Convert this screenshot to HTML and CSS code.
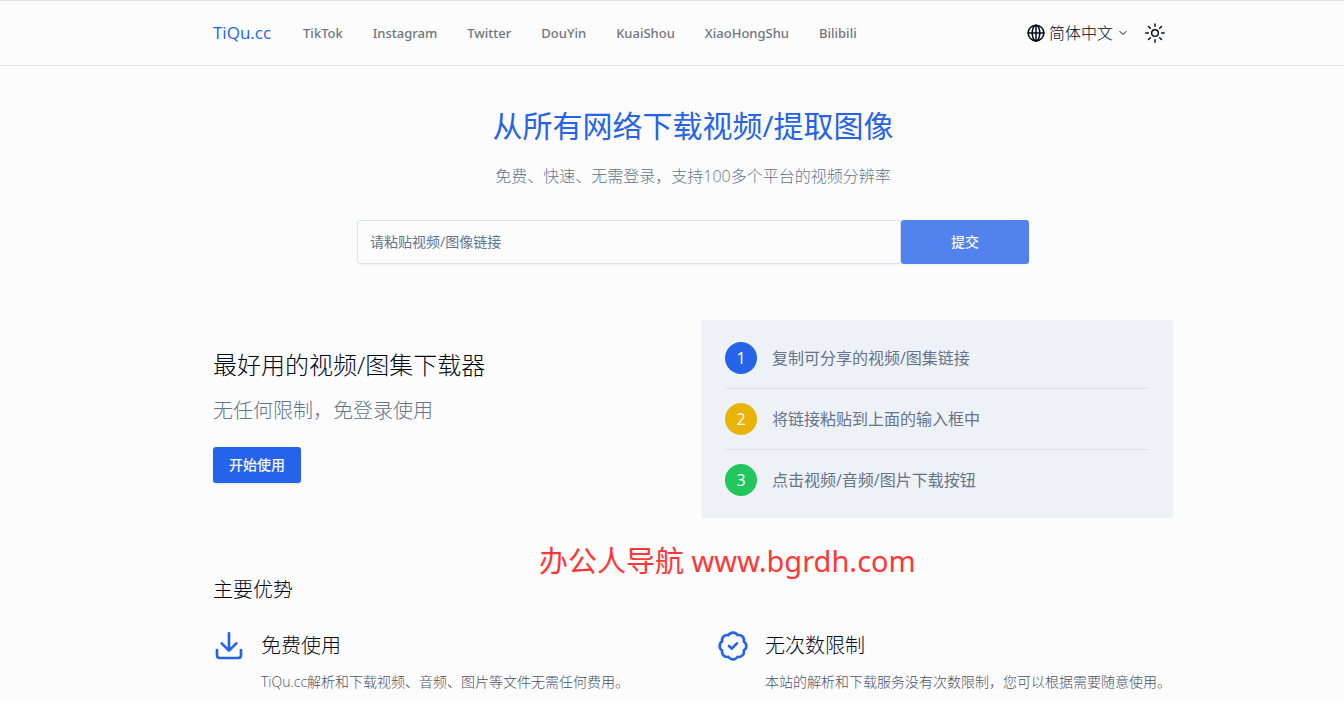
FILE: index.html
```
<!DOCTYPE html>
<html lang="zh-CN">
<head>
  <meta charset="UTF-8" />
  <meta name="viewport" content="width=device-width, initial-scale=1.0" />
  <title>TiQu.cc</title>
  <link rel="stylesheet" href="styles.css">
</head>
<body>
  <header class="site-header">
    <div class="container header-inner">
      <a href="#" class="logo">TiQu.cc</a>
      <nav class="nav">
        <a href="#">TikTok</a>
        <a href="#">Instagram</a>
        <a href="#">Twitter</a>
        <a href="#">DouYin</a>
        <a href="#">KuaiShou</a>
        <a href="#">XiaoHongShu</a>
        <a href="#">Bilibili</a>
      </nav>
      <div class="header-tools">
        <button type="button" class="lang-btn">
          <svg class="globe" viewBox="0 0 24 24" aria-hidden="true">
            <circle cx="12" cy="12" r="10.5"/>
            <ellipse cx="12" cy="12" rx="5" ry="10.5"/>
            <path d="M1.5 12h21M12 1.5v21"/>
          </svg>
          <span>简体中文</span>
          <svg class="chevron" viewBox="0 0 24 24" aria-hidden="true"><path d="M6 9l6 6 6-6"/></svg>
        </button>
        <button type="button" class="theme-btn" aria-label="切换主题">
          <svg viewBox="0 0 24 24" aria-hidden="true">
            <circle cx="12" cy="12" r="4"/>
            <path d="M12 1v3M12 20v3M1 12h3M20 12h3M4.2 4.2l2.2 2.2M17.6 17.6l2.2 2.2M4.2 19.8l2.2-2.2M17.6 6.4l2.2-2.2"/>
          </svg>
        </button>
      </div>
    </div>
  </header>

  <main class="container">
    <section class="hero">
      <h1>从所有网络下载视频/提取图像</h1>
      <p>免费、快速、无需登录，支持100多个平台的视频分辨率</p>
      <form class="search">
        <input type="text" placeholder="请粘贴视频/图像链接" aria-label="请粘贴视频/图像链接">
        <button type="submit">提交</button>
      </form>
    </section>

    <section class="intro">
      <div class="intro-text">
        <h2>最好用的视频/图集下载器</h2>
        <p>无任何限制，免登录使用</p>
        <button type="button" class="start-btn">开始使用</button>
      </div>
      <ol class="steps">
        <li><span class="num blue">1</span>复制可分享的视频/图集链接</li>
        <li><span class="num yellow">2</span>将链接粘贴到上面的输入框中</li>
        <li><span class="num green">3</span>点击视频/音频/图片下载按钮</li>
      </ol>
    </section>

    <section class="features">
      <h2>主要优势</h2>
      <div class="feature-grid">
        <article class="feature">
          <svg viewBox="0 0 24 24" aria-hidden="true">
            <path d="M12 2.5v12.5M6.5 10l5.5 5.5 5.5-5.5"/>
            <path d="M3 15v4a2 2 0 0 0 2 2h14a2 2 0 0 0 2-2V15"/>
          </svg>
          <div>
            <h3>免费使用</h3>
            <p>TiQu.cc解析和下载视频、音频、图片等文件无需任何费用。</p>
          </div>
        </article>
        <article class="feature">
          <svg viewBox="0 0 24 24" aria-hidden="true">
            <path d="M3.85 8.62a4 4 0 0 1 4.78-4.77 4 4 0 0 1 6.74 0 4 4 0 0 1 4.78 4.78 4 4 0 0 1 0 6.74 4 4 0 0 1-4.77 4.78 4 4 0 0 1-6.75 0 4 4 0 0 1-4.78-4.77 4 4 0 0 1 0-6.76z"/>
            <path d="M9 12l2 2 4-4"/>
          </svg>
          <div>
            <h3>无次数限制</h3>
            <p>本站的解析和下载服务没有次数限制，您可以根据需要随意使用。</p>
          </div>
        </article>
      </div>
    </section>
  </main>

  <div class="watermark">办公人导航 www.bgrdh.com</div>
</body>
</html>
```
FILE: styles.css
```
* {
  box-sizing: border-box;
}
body {
  margin: 0;
  font-family: "Open Sans", "Noto Sans CJK SC", sans-serif;
  font-size: 16px;
  font-weight: 300;
  line-height: 24px;
  color: #020817;
  background: #fcfcfd;
  position: relative;
  min-height: 100vh;
  overflow: hidden;
}
h1, h2, h3, p {
  margin: 0;
  font-weight: 300;
}
a {
  text-decoration: none;
}
button, input {
  font: inherit;
}
button {
  border: 0;
  padding: 0;
  background: none;
  color: inherit;
  cursor: pointer;
}
svg {
  fill: none;
  stroke: currentColor;
  stroke-width: 2;
  stroke-linecap: round;
  stroke-linejoin: round;
  flex-shrink: 0;
}
.site-header, main {
  padding-left: 42px;
}
.container {
  max-width: 960px;
  margin: 0 auto;
}

/* Header */
.site-header {
  border-top: 1px solid #e2e2e5;
  border-bottom: 1px solid #e2e4e8;
}
.header-inner {
  display: flex;
  align-items: center;
  height: 64px;
}
.logo {
  font-size: 17px;
  font-weight: 400;
  color: #2563eb;
}
.nav {
  display: flex;
  gap: 30px;
  margin-left: 32px;
}
.nav a {
  font-family: "Noto Sans", sans-serif;
  font-size: 13px;
  font-weight: 500;
  color: #71757e;
}
.header-tools {
  display: flex;
  align-items: center;
  gap: 16px;
  margin-left: auto;
  padding-right: 8px;
}
.lang-btn, .theme-btn {
  display: flex;
  align-items: center;
}
.lang-btn {
  gap: 4px;
}
.globe {
  width: 18px;
  height: 18px;
}
.chevron {
  width: 12px;
  height: 12px;
}
.theme-btn svg {
  width: 20px;
  height: 20px;
  stroke-width: 1.7;
}

/* Hero */
main.container {
  max-width: 1002px;
}
.hero {
  padding-top: 42px;
  text-align: center;
}
.hero h1 {
  font-size: 30px;
  font-weight: 400;
  line-height: 36px;
  color: #2563eb;
}
.hero p {
  margin-top: 20px;
  color: #64748b;
}
.search {
  display: flex;
  width: 70%;
  height: 44px;
  margin: 32px auto 0;
}
.search input {
  flex: 1;
  min-width: 0;
  padding: 0 12px;
  border: 1px solid #dbe3ee;
  border-radius: 3px;
  background: transparent;
  font-size: 14px;
  font-weight: 400;
  box-shadow: 0 1px 2px rgba(0,0,0,0.05);
}
.search input::placeholder {
  color: #64748b;
  opacity: 1;
}
.search button {
  width: 128px;
  border-radius: 3px;
  background: #5182ed;
  color: #f8fafc;
  font-size: 14px;
  font-weight: 500;
  box-shadow: 0 1px 2px rgba(0,0,0,0.05);
}

/* Intro + steps */
.intro {
  display: grid;
  grid-template-columns: 1fr 1fr;
  gap: 16px;
  align-items: center;
  margin-top: 56px;
}
.intro-text {
  padding-bottom: 6px;
}
.intro-text h2 {
  font-size: 24px;
  line-height: 32px;
}
.intro-text p {
  margin: 16px 0 22px;
  font-size: 20px;
  line-height: 28px;
  color: #64748b;
}
.start-btn {
  display: block;
  height: 36px;
  padding: 0 16px;
  border-radius: 3px;
  background: #2563eb;
  color: #f8fafc;
  font-size: 14px;
  font-weight: 500;
  box-shadow: 0 1px 2px rgba(0,0,0,0.1);
}
.steps {
  margin: 0;
  padding: 8px 24px;
  list-style: none;
  border-radius: 3px;
  background: #eef1f6;
  color: #64748b;
  font-weight: 400;
}
.steps li {
  display: flex;
  align-items: center;
  gap: 15px;
  padding: 14px 0;
}
.steps li + li {
  border-top: 1px solid #dfe3e9;
}
.num {
  display: flex;
  align-items: center;
  justify-content: center;
  width: 32px;
  height: 32px;
  border-radius: 50%;
  color: white;
}
.blue { background: #2563eb; }
.yellow { background: #eab308; }
.green { background: #22c55e; }

/* Features */
.features {
  margin-top: 58px;
}
.features h2, .features h3 {
  font-size: 20px;
  line-height: 28px;
}
.feature-grid {
  display: grid;
  grid-template-columns: 1fr 1fr;
  gap: 48px;
  margin-top: 26px;
}
.feature {
  display: flex;
  gap: 16px;
}
.feature svg {
  width: 32px;
  height: 32px;
  color: #2563eb;
}
.feature h3 {
  line-height: 32px;
}
.feature p {
  margin-top: 8px;
  font-size: 14px;
  line-height: 24px;
  color: #4b5162;
  white-space: nowrap;
}

/* Text over the page */
.watermark {
  position: absolute;
  top: 541px;
  left: 539px;
  font-family: "Noto Sans", "Noto Sans CJK SC", sans-serif;
  font-size: 29px;
  font-weight: 400;
  line-height: 40px;
  color: #ff3737;
  white-space: nowrap;
}
```
